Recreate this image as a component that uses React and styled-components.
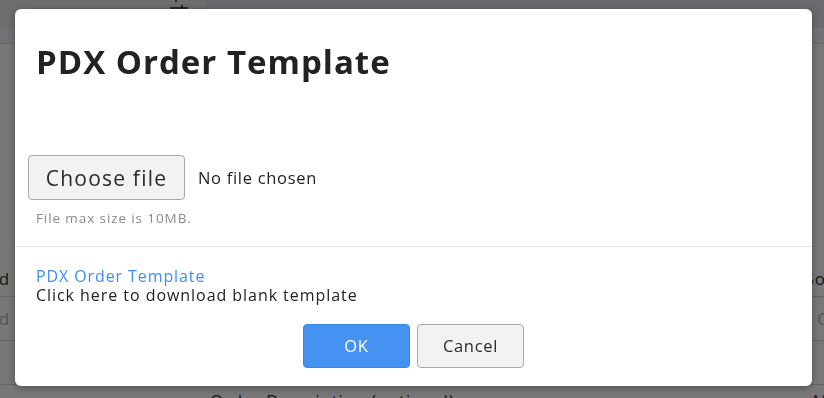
import React from 'react';
import styled, { createGlobalStyle } from 'styled-components';

const GlobalStyle = createGlobalStyle`
  html, body {
    margin: 0;
    padding: 0;
    width: 824px;
    height: 398px;
    overflow: hidden;
    font-family: 'Open Sans', 'Liberation Sans', sans-serif;
  }
`;

function SlidersIcon() {
  return (
    <svg width="20" height="16" viewBox="0 0 20 16" fill="none" stroke="#333" strokeWidth="1.6">
      <line x1="1" y1="-2" x2="19" y2="-2" />
      <line x1="7" y1="-6" x2="7" y2="2" />
      <line x1="1" y1="8" x2="19" y2="8" />
      <line x1="13" y1="5" x2="13" y2="11" />
    </svg>
  );
}

function App() {
  return (
    <>
      <GlobalStyle />
      <Page>
        <TopBar>
          <ToolSlot>
            <SlidersIcon />
          </ToolSlot>
          <ToolFill />
        </TopBar>
        <SubBar />
        <Table>
          <Row $first>
            <Cell>Add Event</Cell>
            <CellRight>Source</CellRight>
          </Row>
          <Row $faded>
            <Cell>Add Event</Cell>
            <CellRight>Open</CellRight>
          </Row>
          <Row>
            <Cell />
            <CellRight />
          </Row>
          <BottomRow>
            <Caption>Order Description (optional)</Caption>
            <Caption>All</Caption>
          </BottomRow>
        </Table>
      </Page>

      <Overlay />

      <Modal>
        <Header>
          <Title>PDX Order Template</Title>
        </Header>
        <Body>
          <FileRow>
            <ChooseButton type="button">Choose file</ChooseButton>
            <FileName>No file chosen</FileName>
          </FileRow>
          <Hint>File max size is 10MB.</Hint>
        </Body>
        <Divider />
        <Footer>
          <TemplateLink href="#">PDX Order Template</TemplateLink>
          <LinkNote>Click here to download blank template</LinkNote>
          <Actions>
            <ActionButton $primary type="button">OK</ActionButton>
            <ActionButton type="button">Cancel</ActionButton>
          </Actions>
        </Footer>
      </Modal>
    </>
  );
}

export default App;

const Page = styled.div`
  width: 824px;
  height: 398px;
  background: #ffffff;
  display: flex;
  flex-direction: column;
  overflow: hidden;
`;

const TopBar = styled.div`
  flex: none;
  height: 28px;
  display: flex;
  background: #eaeaea;
`;

const ToolSlot = styled.div`
  width: 207px;
  display: flex;
  justify-content: flex-end;
  align-items: flex-start;
  padding-right: 17px;
  box-sizing: border-box;
  border-right: 1px solid #cfd3d9;
  overflow: hidden;
`;

const ToolFill = styled.div`
  flex: 1;
  background: #e0e4ea;
`;

const SubBar = styled.div`
  flex: none;
  height: 15px;
  background: #f1f5fa;
  border-bottom: 1px solid #d8dde4;
`;

const Table = styled.div`
  flex: none;
  display: flex;
  flex-direction: column;
  padding-top: 217px;
`;

const Row = styled.div`
  flex: none;
  height: ${({ $first }) => ($first ? '36px' : '44px')};
  display: flex;
  justify-content: space-between;
  align-items: center;
  box-sizing: border-box;
  border-bottom: 1px solid #d9d9d9;
  color: ${({ $faded }) => ($faded ? '#b5b5b5' : '#333')};
  font-size: 17px;
  letter-spacing: 0.8px;
  overflow: hidden;
`;

const Cell = styled.span`
  margin-left: -24px;
`;

const CellRight = styled.span`
  margin-right: -40px;
`;

const BottomRow = styled.div`
  flex: none;
  display: flex;
  justify-content: space-between;
  padding: 4px 0 0 210px;
  color: #333;
  font-size: 17px;
  letter-spacing: 0.8px;
`;

const Caption = styled.span`
  &:last-child {
    margin-right: -8px;
  }
`;

const Overlay = styled.div`
  position: fixed;
  inset: 0;
  background: rgba(0, 0, 0, 0.53);
`;

const Modal = styled.div`
  position: fixed;
  top: 9px;
  left: 15px;
  width: 797px;
  height: 377px;
  background: #ffffff;
  border-radius: 6px;
  box-shadow: 0 2px 10px rgba(0, 0, 0, 0.35);
  display: flex;
  flex-direction: column;
`;

const Header = styled.div`
  padding: 33px 21px 0 21px;
  height: 132px;
  box-sizing: border-box;
`;

const Title = styled.h1`
  margin: 0;
  font-family: 'Open Sans', 'Liberation Sans', sans-serif;
  font-weight: 700;
  font-size: 33px;
  line-height: 40px;
  color: #222222;
  letter-spacing: 1px;
`;

const Body = styled.div`
  padding: 14px 13px 0 13px;
  height: 105px;
  box-sizing: border-box;
`;

const FileRow = styled.div`
  display: flex;
  align-items: center;
  gap: 13px;
`;

const ChooseButton = styled.button`
  width: 157px;
  height: 45px;
  border: 1px solid #a9a9a9;
  border-radius: 4px;
  background: #f2f2f2;
  font-family: 'Open Sans', 'Liberation Sans', sans-serif;
  font-size: 21px;
  letter-spacing: 1.2px;
  color: #2b2b2b;
  padding: 0;
`;

const FileName = styled.span`
  font-size: 16.5px;
  letter-spacing: 0.7px;
  color: #222;
`;

const Hint = styled.div`
  margin: 9px 0 0 8px;
  font-size: 13.5px;
  letter-spacing: 0.9px;
  color: #8a8a8a;
`;

const Divider = styled.div`
  height: 1px;
  background: #e6e6e6;
`;

const Footer = styled.div`
  padding: 20px 21px 0 21px;
  display: flex;
  flex-direction: column;
`;

const TemplateLink = styled.a`
  font-size: 16px;
  line-height: 19px;
  letter-spacing: 0.9px;
  color: #3d8ff0;
  text-decoration: none;
  align-self: flex-start;
`;

const LinkNote = styled.div`
  font-size: 16px;
  line-height: 19px;
  letter-spacing: 0.95px;
  color: #222;
`;

const Actions = styled.div`
  display: flex;
  justify-content: center;
  gap: 7px;
  margin-top: 19px;
`;

const ActionButton = styled.button`
  width: 107px;
  height: 44px;
  border-radius: 4px;
  border: 1px solid ${({ $primary }) => ($primary ? '#3a86e6' : '#a9a9a9')};
  background: ${({ $primary }) => ($primary ? '#4592f2' : '#f2f2f2')};
  color: ${({ $primary }) => ($primary ? '#ffffff' : '#2b2b2b')};
  font-family: 'Open Sans', 'Liberation Sans', sans-serif;
  font-size: 16.5px;
  letter-spacing: 0.7px;
  padding: 0 0 2px 0;
`;
